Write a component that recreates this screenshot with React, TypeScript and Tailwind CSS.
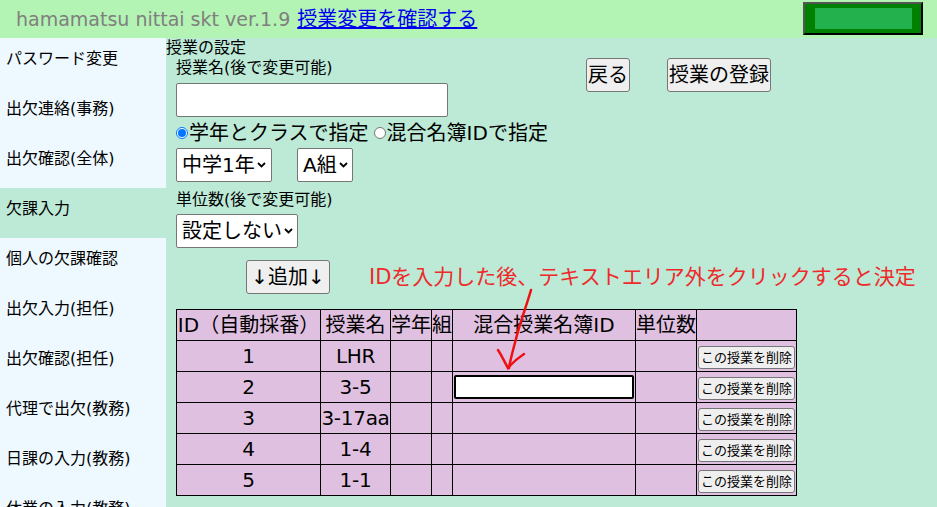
import React from 'react';

const FONT = { fontFamily: '"DejaVu Sans", "Noto Sans CJK JP", sans-serif' };

const menu = [
    'パスワード変更',
    '出欠連絡(事務)',
    '出欠確認(全体)',
    '欠課入力',
    '個人の欠課確認',
    '出欠入力(担任)',
    '出欠確認(担任)',
    '代理で出欠(教務)',
    '日課の入力(教務)',
    '休業の入力(教務)',
];

const rows = [
    {id: 1, name: 'LHR'},
    {id: 2, name: '3-5', editing: true},
    {id: 3, name: '3-17aa'},
    {id: 4, name: '1-4'},
    {id: 5, name: '1-1'},
];

const Chevron = () => (
    <svg width="9" height="6" viewBox="0 0 9 6" className="ml-[2px]">
        <path d="M1 1 L4.5 4.5 L8 1" stroke="#000" strokeWidth="1.8" fill="none"/>
    </svg>
);

const Select = ({label, w}: { label: string, w: string }) => (
    <div className={`flex h-[34px] ${w} items-center rounded-[2px] border border-[#767676] bg-white pl-[5px] text-[20px] leading-[24px] text-black`}>
        <span>{label}</span>
        <Chevron/>
    </div>
);

const Radio = ({checked}: { checked?: boolean }) => (
    <span className={`inline-flex h-[12px] w-[12px] items-center justify-center rounded-full border ${checked ? 'border-[#0075ff]' : 'border-[#767676]'} bg-white`}>
        {checked && <span className="h-[8px] w-[8px] rounded-full bg-[#0075ff]"/>}
    </span>
);

export default function App() {
    return (
        <div className="h-[507px] w-[937px] overflow-hidden bg-[#bde9d7] text-black" style={FONT}>
            {/* header */}
            <div className="flex h-[38px] items-center bg-[#b3f3b3] pl-[16px] pr-[14px]">
                <span className="text-[19px] leading-[24px] text-[#7f7f7f]">hamamatsu nittai skt ver.1.9</span>
                <a className="ml-[7px] text-[20px] leading-[24px] text-[#0000ee] underline">授業変更を確認する</a>
                <div className="ml-auto mb-[4px] mt-[2px] flex h-[33px] w-[120px] items-center justify-center border-2 border-b-black border-l-[#555] border-r-black border-t-[#555] bg-[#008000]">
                    <div className="h-[21px] w-[97px] bg-[#22b14c]"/>
                </div>
            </div>

            <div className="flex">
                {/* side menu */}
                <div className="w-[166px] shrink-0">
                    {menu.map((m, i) => (
                        <div key={m}
                             className={`h-[50px] pl-[6px] pt-[10px] text-[16px] leading-[22px] ${i === 3 ? 'bg-[#bde9d7]' : 'bg-[#eef8ff]'}`}>
                            {m}
                        </div>
                    ))}
                </div>

                {/* main */}
                <div className="relative flex-1">
                    <div className="text-[16px] leading-[20px]">授業の設定</div>
                    <div className="flex pl-[10px]">
                        <div className="w-[410px] shrink-0">
                            <div className="text-[16px] leading-[20px]">授業名(後で変更可能)</div>
                            <div className="mt-[5px] h-[34px] w-[272px] rounded-[2px] border border-[#767676] bg-white"/>
                            <div className="mt-[4px] flex h-[24px] items-center text-[20px] leading-[24px]">
                                <Radio checked/>
                                <span className="ml-[1px]">学年とクラスで指定</span>
                                <span className="ml-[5px] flex"><Radio/></span>
                                <span className="ml-[1px]">混合名簿IDで指定</span>
                            </div>
                            <div className="mt-[3px] flex gap-[25px]">
                                <Select label="中学1年" w="w-[96px]"/>
                                <Select label="A組" w="w-[56px]"/>
                            </div>
                            <div className="mt-[8px] text-[16px] leading-[20px]">単位数(後で変更可能)</div>
                            <div className="mt-[4px]">
                                <Select label="設定しない" w="w-[122px]"/>
                            </div>
                        </div>
                        <div className="flex items-start gap-[37px]">
                            <button className="h-[34px] rounded-[3px] border border-[#767676] bg-[#efefef] px-[1px] text-[20px] leading-[24px]">戻る</button>
                            <button className="h-[34px] rounded-[3px] border border-[#767676] bg-[#efefef] px-[1px] text-[20px] leading-[24px]">授業の登録</button>
                        </div>
                    </div>

                    <div className="mt-[12px] flex items-center pl-[80px]">
                        <button className="h-[34px] w-[84px] rounded-[3px] border border-[#767676] bg-[#efefef] text-[20px] leading-[24px]">↓追加↓</button>
                        <span className="ml-[39px] text-[21px] leading-[26px] text-[#ee2a2a]">IDを入力した後、テキストエリア外をクリックすると決定</span>
                    </div>

                    <table className="ml-[10px] mt-[15px] border-collapse border border-black bg-[#e0c0e0] text-[20px] leading-[24px]">
                        <thead>
                        <tr className="h-[31px]">
                            <th className="w-[144px] border border-black p-0 font-normal whitespace-nowrap">ID（自動採番）</th>
                            <th className="w-[70px] border border-black p-0 font-normal whitespace-nowrap">授業名</th>
                            <th className="w-[41px] border border-black p-0 font-normal whitespace-nowrap">学年</th>
                            <th className="w-[21px] border border-black p-0 font-normal whitespace-nowrap">組</th>
                            <th className="w-[183px] border border-black p-0 font-normal whitespace-nowrap">混合授業名簿ID</th>
                            <th className="w-[61px] border border-black p-0 font-normal whitespace-nowrap">単位数</th>
                            <th className="w-[100px] border border-black p-0 font-normal"></th>
                        </tr>
                        </thead>
                        <tbody>
                        {rows.map((r) => (
                            <tr key={r.id} className="h-[31px] text-center">
                                <td className="border border-black p-0">{r.id}</td>
                                <td className="border border-black p-0 whitespace-nowrap tracking-[-0.3px]">{r.name}</td>
                                <td className="border border-black p-0"></td>
                                <td className="border border-black p-0"></td>
                                <td className="border border-black p-0 px-[1px]">
                                    {r.editing && <div className="h-[24px] w-full rounded-[2px] border-2 border-black bg-white"/>}
                                </td>
                                <td className="border border-black p-0"></td>
                                <td className="border border-black p-0 pl-[1px] pr-[1px]">
                                    <button className="h-[23px] w-[97px] rounded-[3px] border border-[#767676] bg-[#efefef] text-[13px] leading-[20px] whitespace-nowrap">この授業を削除</button>
                                </td>
                            </tr>
                        ))}
                        </tbody>
                    </table>

                    {/* hand-drawn arrow */}
                    <svg className="pointer-events-none absolute left-[320px] top-[240px]" width="60" height="100" viewBox="0 0 60 100">
                        <path d="M45 12 C41 26 35 42 31 57 C28 69 25 78 23 90" stroke="#ee1111" strokeWidth="2.5" fill="none" strokeLinecap="round"/>
                        <path d="M12 72 C16 78 19 85 22 90 C27 84 32 80 38 76" stroke="#ee1111" strokeWidth="2.5" fill="none" strokeLinecap="round"/>
                    </svg>
                </div>
            </div>
        </div>
    );
}
